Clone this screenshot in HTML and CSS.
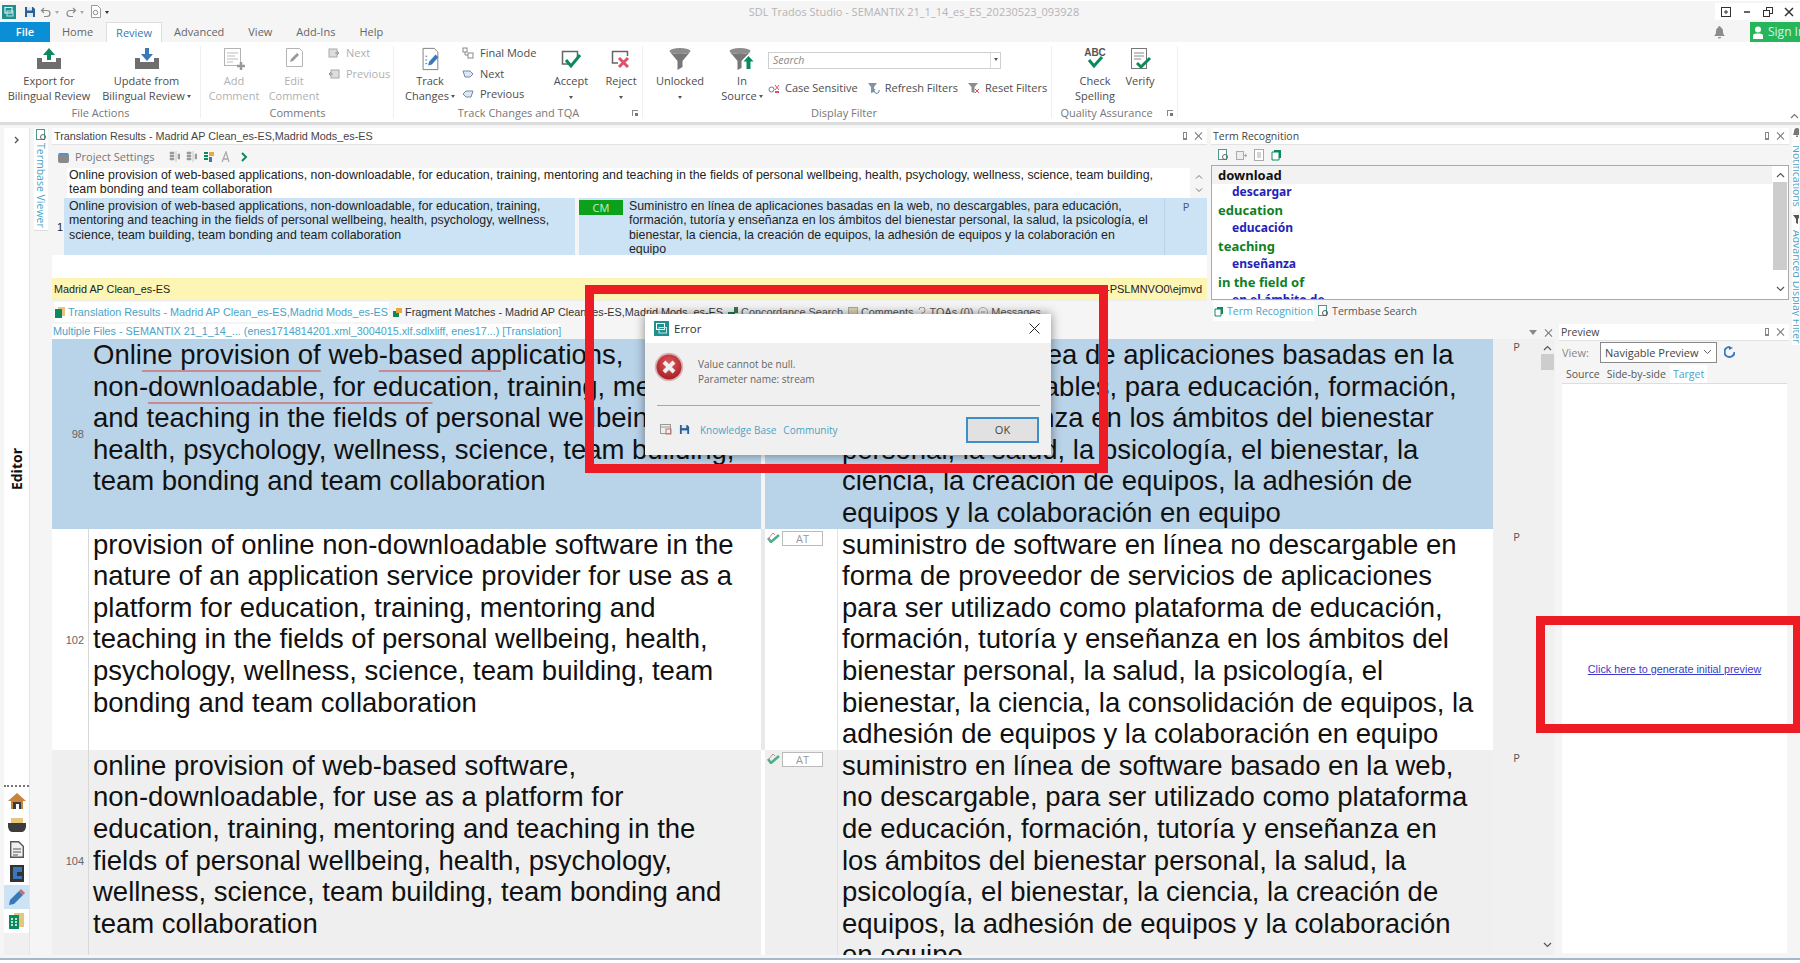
FILE: index.html
```html
<!DOCTYPE html>
<html lang="en">
<head>
    <meta charset="UTF-8">
    <meta name="viewport" content="width=device-width, initial-scale=1.0">
    <title>SDL Trados Studio</title>
    <link rel="stylesheet" href="styles.css">
</head>
<body>
    <!-- title bar -->
    <div class="titlebar">
        <div class="qat">
            <svg width="14" height="14" viewBox="0 0 14 14"><rect width="14" height="14" fill="#1f8f8f"/><rect x="3" y="2.5" width="7" height="5.5" fill="none" stroke="#fff"/><rect x="5" y="6" width="6" height="5" fill="none" stroke="#bfe8e0"/></svg>
            <svg width="12" height="12" viewBox="0 0 12 12"><path d="M1 1h8l2 2v8H1z" fill="#2c5f96"/><rect x="3" y="1" width="5" height="3.5" fill="#dde8f2"/><rect x="3" y="7" width="6" height="4" fill="#dde8f2"/></svg>
            <svg width="12" height="12" viewBox="0 0 12 12"><path d="M4 2L1.500 4.500 4 7M2 4.500h5a3 3 0 0 1 0 6H4" fill="none" stroke="#8a8a8a" stroke-width="1.200"/></svg>
            <span class="qat-dot"></span>
            <svg width="12" height="12" viewBox="0 0 12 12"><path d="M8 2l2.500 2.500L8 7M10 4.500H5a3 3 0 0 0 0 6h3" fill="none" stroke="#8a8a8a" stroke-width="1.200"/></svg>
            <span class="qat-dot"></span>
            <svg width="12" height="13" viewBox="0 0 12 13"><path d="M1.500 .5h6l3 3v9h-9z" fill="#fff" stroke="#9a9a9a"/><circle cx="5.500" cy="7.500" r="2.200" fill="none" stroke="#8a8a8a"/></svg>
            <span class="qat-dot dark"></span>
        </div>
        <div class="app-title">SDL Trados Studio - SEMANTIX 21_1_14_es_ES_20230523_093928</div>
        <div class="winctl">
            <span class="winbtn"><svg width="10" height="10" viewBox="0 0 10 10"><rect x=".5" y=".5" width="9" height="9" fill="none" stroke="#333"/><path d="M5 3v4M3 5h4" stroke="#333"/></svg></span>
            <span class="winbtn"><svg width="10" height="10" viewBox="0 0 10 10"><path d="M2 5h6" stroke="#333" stroke-width="1.500"/></svg></span>
            <span class="winbtn"><svg width="10" height="10" viewBox="0 0 10 10"><rect x="3.500" y=".5" width="6" height="6" fill="none" stroke="#333"/><rect x=".5" y="3.500" width="6" height="6" fill="#fff" stroke="#333"/></svg></span>
            <span class="winbtn"><svg width="10" height="10" viewBox="0 0 10 10"><path d="M1 1l8 8M9 1l-8 8" stroke="#333" stroke-width="1.500"/></svg></span>
        </div>
    </div>

    <!-- ribbon tabs -->
    <div class="tabbar">
        <div class="tab-file">File</div>
        <div class="tab t-home">Home</div>
        <div class="tab active">Review</div>
        <div class="tab">Advanced</div>
        <div class="tab">View</div>
        <div class="tab">Add-Ins</div>
        <div class="tab">Help</div>
        <div class="tab-right">
            <svg width="11" height="13" viewBox="0 0 11 13"><path d="M5.500 0c.8 0 1 .6 1 1.200C8.500 1.800 9 3.500 9 6c0 2 1 3 2 4H0c1-1 2-2 2-4 0-2.500.5-4.200 2.500-4.800C4.500.6 4.700 0 5.500 0zM4 11h3a1.500 1.500 0 0 1-3 0z" fill="#8c8c8c"/></svg>
            <div class="signin">
                <svg width="10" height="13" viewBox="0 0 10 13"><circle cx="5" cy="3.500" r="3" fill="#fff"/><path d="M0 13V9.500C0 8 2 7.500 5 7.500s5 .5 5 2V13z" fill="#fff"/></svg>
                <span>Sign In</span>
            </div>
        </div>
    </div>

    <!-- ribbon -->
    <div class="ribbon">
        <div class="group g-file">
            <div class="group-body">
                <div class="rbtn w84">
                    <svg width="26" height="24" viewBox="0 0 26 24"><path d="M13 1l6 7h-4v5h-4V8H7z" fill="#0d8a5d"/><path d="M1 11h5v4h14v-4h5v11H1z" fill="#6e6e6e"/></svg>
                    <span>Export for<br>Bilingual Review</span>
                </div>
                <div class="rbtn w87 ml12">
                    <svg width="26" height="24" viewBox="0 0 26 24"><path d="M11 1h4v6h4l-6 7-6-7h4z" fill="#3a78b8"/><path d="M1 11h5v4h14v-4h5v11H1z" fill="#6e6e6e"/></svg>
                    <span>Update from<br>Bilingual Review<i class="drop"></i></span>
                </div>
            </div>
            <div class="group-name">File Actions</div>
        </div>

        <div class="group g-comments">
            <div class="group-body">
                <div class="rbtn w50 off">
                    <svg width="24" height="24" viewBox="0 0 24 24"><rect x="2.500" y="1.500" width="16" height="17" fill="#fff" stroke="#b4b4b4"/><path d="M5 6h11M5 9h8M5 12h11M5 15h6" stroke="#bbb"/><path d="M15 19h8M19 15v8" stroke="#999" stroke-width="2.500"/></svg>
                    <span>Add<br>Comment</span>
                </div>
                <div class="rbtn w50 ml10 off">
                    <svg width="24" height="24" viewBox="0 0 24 24"><path d="M4.500 1.500h13l3 3v15h-16z" fill="#fff" stroke="#b4b4b4"/><path d="M8 15l1-3 6-6 2 2-6 6z" fill="#999"/></svg>
                    <span>Edit<br>Comment</span>
                </div>
                <div class="small-col off ml9">
                    <div class="small"><svg width="12" height="12" viewBox="0 0 12 12"><rect x="1" y="2" width="8" height="8" fill="#ddd" stroke="#aaa"/><path d="M7 6h4M9 4l2 2-2 2" fill="none" stroke="#999"/></svg><span>Next</span></div>
                    <div class="small"><svg width="12" height="12" viewBox="0 0 12 12"><rect x="3" y="2" width="8" height="8" fill="#ddd" stroke="#aaa"/><path d="M5 6H1M3 4L1 6l2 2" fill="none" stroke="#999"/></svg><span>Previous</span></div>
                </div>
            </div>
            <div class="group-name">Comments</div>
        </div>

        <div class="group g-track">
            <div class="group-body">
                <div class="rbtn w56">
                    <svg width="24" height="26" viewBox="0 0 24 26"><path d="M4.500 1.500h12l4 4v19h-16z" fill="#fff" stroke="#7a7a7a"/><path d="M7 10h3M7 14h2M7 18h2" stroke="#3a78b8" stroke-dasharray="2 1"/><path d="M10 20l1-4 7-8 3 3-7 8z" fill="#3a78b8"/></svg>
                    <span>Track<br>Changes<i class="drop"></i></span>
                </div>
                <div class="small-col track-col">
                    <div class="small"><svg width="12" height="12" viewBox="0 0 12 12"><rect x="1" y="1" width="4" height="4" fill="none" stroke="#888"/><rect x="6" y="6" width="5" height="5" fill="none" stroke="#888"/><path d="M3 5v3h3" fill="none" stroke="#888"/></svg><span>Final Mode</span></div>
                    <div class="small"><svg width="12" height="12" viewBox="0 0 12 12"><path d="M1 3h7l3 3-3 3H3z" fill="#dfe8f2" stroke="#6f8aa8"/></svg><span>Next</span></div>
                    <div class="small"><svg width="12" height="12" viewBox="0 0 12 12"><path d="M11 3H4L1 6l3 3h5z" fill="#dfe8f2" stroke="#6f8aa8"/></svg><span>Previous</span></div>
                </div>
                <div class="rbtn w44 ml5">
                    <svg width="22" height="24" viewBox="0 0 22 24"><path d="M8 17H2.500V4.500h15V10" fill="none" stroke="#666" stroke-width="1.500"/><path d="M6 13l5 6 9-11" fill="none" stroke="#0d8a5d" stroke-width="3"/></svg>
                    <span>Accept<br><i class="drop solo"></i></span>
                </div>
                <div class="rbtn w44 ml6">
                    <svg width="22" height="24" viewBox="0 0 22 24"><path d="M8 16H2.500V4.500h15V9" fill="none" stroke="#666" stroke-width="1.500"/><path d="M9 11l9 9M18 11l-9 9" stroke="#e0506a" stroke-width="3"/></svg>
                    <span>Reject<br><i class="drop solo"></i></span>
                </div>
            </div>
            <div class="group-name">Track Changes and TQA</div>
            <i class="launcher"></i>
        </div>

        <div class="group g-filter">
            <div class="group-body">
                <div class="rbtn w56 ml9">
                    <svg width="24" height="24" viewBox="0 0 24 24"><ellipse cx="12" cy="4" rx="10.500" ry="3" fill="#8c8c8c"/><path d="M2 5l7.500 9v9l5-3v-6L22 5c-3 2.500-17 2.500-20 0z" fill="#777"/></svg>
                    <span>Unlocked<br><i class="drop solo"></i></span>
                </div>
                <div class="rbtn w50 ml9">
                    <svg width="26" height="24" viewBox="0 0 26 24"><ellipse cx="11" cy="4" rx="10.500" ry="3" fill="#8c8c8c"/><path d="M1 5l7.500 9v9l4-2v-7L21 5c-3 2.500-17 2.500-20 0z" fill="#777"/><path d="M19.500 9l5 5.500H21.500V22h-4v-7.500h-3z" fill="#0d8a5d"/></svg>
                    <span>In<br>Source<i class="drop"></i></span>
                </div>
                <div class="filter-col">
                    <div class="search"><span>Search</span><b><i class="drop solo"></i></b></div>
                    <div class="filter-opts">
                        <div class="small"><svg width="12" height="12" viewBox="0 0 12 12"><path d="M7 3l4 5M11 3L7 8" stroke="#e0506a"/><path d="M7 9h4v2H7z" fill="#e0506a"/><circle cx="3.500" cy="7.500" r="2.500" fill="none" stroke="#5b7d9c"/></svg><span>Case Sensitive</span></div>
                        <div class="small"><svg width="13" height="12" viewBox="0 0 13 12"><path d="M1 1h9L7 5v5L4 11V5z" fill="#7e93a8"/><path d="M8 7a2.500 2.500 0 1 0 4 1" fill="none" stroke="#5b7d9c"/></svg><span>Refresh Filters</span></div>
                        <div class="small"><svg width="13" height="12" viewBox="0 0 13 12"><path d="M1 1h10L7.500 5v6l-3-1V5z" fill="#8c8c8c"/><path d="M8 7l4 4M12 7l-4 4" stroke="#e0506a"/></svg><span>Reset Filters</span></div>
                    </div>
                </div>
            </div>
            <div class="group-name">Display Filter</div>
        </div>

        <div class="group g-qa">
            <div class="group-body">
                <div class="rbtn w50 ml18">
                    <svg width="26" height="24" viewBox="0 0 26 24"><text x="13" y="9" class="abc">ABC</text><path d="M7 13l5 6 8-9" fill="none" stroke="#0d8a5d" stroke-width="3"/></svg>
                    <span>Check<br>Spelling</span>
                </div>
                <div class="rbtn w40">
                    <svg width="24" height="24" viewBox="0 0 24 24"><rect x="3.500" y="1.500" width="15" height="20" fill="#fff" stroke="#777"/><path d="M6 6h10M6 9h10M6 12h7" stroke="#888"/><path d="M9 16l4 4 9-9" fill="none" stroke="#0d8a5d" stroke-width="3"/></svg>
                    <span>Verify</span>
                </div>
            </div>
            <div class="group-name qa-name">Quality Assurance</div>
            <i class="launcher"></i>
        </div>
        <div class="ribbon-fold">
            <svg width="9" height="6" viewBox="0 0 9 6"><path d="M1 5l3.500-3.500L8 5" fill="none" stroke="#777" stroke-width="1.200"/></svg>
        </div>
    </div>

    <!-- workspace -->
    <div class="workspace">
        <div class="sidebar">
            <div class="side-toggle"><svg width="6" height="8" viewBox="0 0 6 8"><path d="M1 1l3 3-3 3" fill="none" stroke="#555" stroke-width="1.400"/></svg></div>
            <div class="side-label"><span>Editor</span></div>
            <div class="side-dots"></div>
            <div class="side-icon"><svg width="18" height="16" viewBox="0 0 18 16"><path d="M9 0L0 8h3v8h12V8h3z" fill="#c8843a"/><rect x="5" y="9" width="8" height="7" fill="#3c3c3c"/><rect x="8" y="11" width="3" height="5" fill="#fff"/></svg></div>
            <div class="side-icon"><svg width="18" height="14" viewBox="0 0 18 14"><rect x="3" y="0" width="12" height="6" fill="#e6c67a"/><path d="M0 5h18v3c0 3-2 6-4 6H4C2 14 0 11 0 8z" fill="#3c3c3c"/></svg></div>
            <div class="side-icon"><svg width="14" height="17" viewBox="0 0 14 17"><path d="M.7.700h8l4.600 4.600v11H.7z" fill="#eee" stroke="#555" stroke-width="1.400"/><path d="M3 8h8M3 11h8M3 14h5" stroke="#555"/></svg></div>
            <div class="side-icon"><svg width="14" height="17" viewBox="0 0 14 17"><rect width="14" height="17" fill="#333"/><path d="M3 2h9v5H7v4h5v3H3z" fill="#3a78b8"/></svg></div>
            <div class="side-icon current"><svg width="16" height="16" viewBox="0 0 16 16"><path d="M0 16l1-5 9-9 4 4-9 9z" fill="#3a78b8"/><path d="M10 2l2-2 4 4-2 2z" fill="#d06a6a"/></svg></div>
            <div class="side-icon"><svg width="15" height="16" viewBox="0 0 15 16"><rect x="5" y="0" width="10" height="14" fill="#e6c67a"/><rect x="0" y="2" width="10" height="14" fill="#0d8a5d"/><path d="M2 6h2M6 6h2M2 9h2M6 9h2M2 12h2M6 12h2" stroke="#fff" stroke-width="1.500"/></svg></div>
            <div class="side-rest"></div>
        </div>

        <div class="termbase-tab">
            <svg width="11" height="12" viewBox="0 0 11 12"><rect x=".5" y=".5" width="8" height="10" fill="#fff" stroke="#4c9a8a"/><circle cx="7" cy="8" r="2.500" fill="none" stroke="#666"/></svg>
            <span>Termbase Viewer</span>
        </div>

        <div class="main">
            <div class="top-row">
                <section class="panel tm-panel">
                    <div class="panel-head">
                        <span>Translation Results - Madrid AP Clean_es-ES,Madrid Mods_es-ES</span>
                        <span class="panel-ctl"><i class="pin"></i><i class="close"></i></span>
                    </div>
                    <div class="tm-tools">
                        <svg width="13" height="12" viewBox="0 0 13 12"><path d="M1 4h11v6a2 2 0 0 1-2 2H3a2 2 0 0 1-2-2z" fill="#8a8a8a"/><path d="M2 2h9l1 2H1z" fill="#5b8fc0"/></svg>
                        <span class="tm-settings">Project Settings</span>
                        <svg class="tool-first" width="11" height="11" viewBox="0 0 11 11"><path d="M1 1h4v2H1zM1 4h4v2H1zM1 7h4v2H1zM7 0v11M9 3h2v5H9z" fill="#9a9a9a" stroke="#9a9a9a" stroke-width=".5"/></svg>
                        <svg width="11" height="11" viewBox="0 0 11 11"><path d="M1 1h4v2H1zM1 4h4v2H1zM1 7h4v2H1zM7 0v11M9 3h2v5H9z" fill="#9a9a9a" stroke="#9a9a9a" stroke-width=".5"/></svg>
                        <svg width="11" height="11" viewBox="0 0 11 11"><path d="M1 1h4v2H1zM1 4h4v2H1zM1 7h4v2H1z" fill="#0d8a5d"/><path d="M6 1h5v4H6z" fill="#e6a93a"/><path d="M6 6h3v5H6z" fill="#3a78b8"/></svg>
                        <svg width="11" height="12" viewBox="0 0 11 12"><path d="M2 11l4-10 3 10M3 8h5" fill="none" stroke="#aaa" stroke-width="1.300"/></svg>
                        <svg class="tool-next" width="7" height="10" viewBox="0 0 7 10"><path d="M1 1l4 4-4 4" fill="none" stroke="#0d8a5d" stroke-width="2"/></svg>
                    </div>
                    <div class="tm-source">
                        <div class="tm-source-text">Online provision of web-based applications, non-downloadable, for education, training, mentoring and teaching in the fields of personal wellbeing, health, psychology, wellness, science, team building,<br>team bonding and team collaboration</div>
                        <div class="tm-source-scroll">
                            <svg width="8" height="6" viewBox="0 0 8 6"><path d="M1 4.500L4 1.500l3 3" fill="none" stroke="#777"/></svg>
                            <svg width="8" height="6" viewBox="0 0 8 6"><path d="M1 1.500L4 4.500l3-3" fill="none" stroke="#777"/></svg>
                        </div>
                    </div>
                    <div class="tm-hit">
                        <div class="tm-num">1</div>
                        <div class="tm-src">Online provision of web-based applications, non-downloadable, for education, training,<br>mentoring and teaching in the fields of personal wellbeing, health, psychology, wellness,<br>science, team building, team bonding and team collaboration</div>
                        <div class="tm-gap"></div>
                        <div class="tm-badge-cell"><span class="cm">CM</span></div>
                        <div class="tm-tgt">Suministro en línea de aplicaciones basadas en la web, no descargables, para educación,<br>formación, tutoría y enseñanza en los ámbitos del bienestar personal, la salud, la psicología, el<br>bienestar, la ciencia, la creación de equipos, la adhesión de equipos y la colaboración en<br>equipo</div>
                        <div class="tm-p">P</div>
                    </div>
                    <div class="tm-blank"></div>
                    <div class="tm-yellow">
                        <span class="tm-y-name">Madrid AP Clean_es-ES</span>
                        <span class="tm-y-user">DESKTOP-PSLMNVO0\ejmvd</span>
                    </div>
                    <div class="tm-tabs">
                        <div class="lower-tab on"><svg width="10" height="11" viewBox="0 0 10 11"><rect x="3" y="0" width="7" height="9" fill="#e6c67a"/><rect y="2" width="7" height="9" fill="#0d8a5d"/></svg><span>Translation Results - Madrid AP Clean_es-ES,Madrid Mods_es-ES</span></div>
                        <div class="lower-tab"><svg width="9" height="9" viewBox="0 0 9 9"><rect y="3" width="6" height="6" fill="#0d8a5d"/><rect x="3" width="6" height="5" fill="#e6a93a"/></svg><span>Fragment Matches - Madrid AP Clean_es-ES,Madrid Mods_es-ES</span></div>
                        <div class="lower-tab"><svg width="10" height="10" viewBox="0 0 10 10"><rect y="5" width="7" height="5" fill="#0d8a5d"/><rect x="6" width="4" height="6" fill="#3a7a50"/></svg><span>Concordance Search</span></div>
                        <div class="lower-tab"><svg width="10" height="10" viewBox="0 0 10 10"><rect x=".5" y=".5" width="9" height="9" fill="#ddd6b0" stroke="#aaa"/></svg><span>Comments</span></div>
                        <div class="lower-tab"><svg width="8" height="10" viewBox="0 0 8 10"><path d="M1 3a3 3 0 1 1 3 3v2M4 9v1" fill="none" stroke="#999"/></svg><span>TQAs (0)</span></div>
                        <div class="lower-tab"><svg width="10" height="10" viewBox="0 0 10 10"><circle cx="5" cy="5" r="4.500" fill="none" stroke="#aaa"/><path d="M3 5h4" stroke="#999"/></svg><span>Messages</span></div>
                    </div>
                </section>

                <section class="panel term-panel">
                    <div class="panel-head">
                        <span class="ui">Term Recognition</span>
                        <span class="panel-ctl"><i class="pin"></i><i class="close"></i></span>
                    </div>
                    <div class="term-tools">
                        <svg width="11" height="12" viewBox="0 0 11 12"><rect x=".5" y=".5" width="8" height="10" fill="#fff" stroke="#4c9a8a"/><circle cx="7" cy="8" r="2.500" fill="none" stroke="#666"/></svg>
                        <svg width="11" height="11" viewBox="0 0 11 11"><rect x=".5" y="1.500" width="7" height="8" fill="#eee" stroke="#aaa"/><path d="M7 5.500h4M9 4l2 1.500L9 7" fill="none" stroke="#aaa"/></svg>
                        <svg width="10" height="12" viewBox="0 0 10 12"><rect x=".5" y=".5" width="9" height="11" fill="#fff" stroke="#aaa"/><path d="M3 4h4M3 6h4M3 8h4" stroke="#aaa"/></svg>
                        <svg width="11" height="12" viewBox="0 0 11 12"><path d="M1 3h7v8H1z" fill="#fff" stroke="#0d8a5d"/><path d="M3 1h7v8H8V3H3z" fill="#0d8a5d"/></svg>
                    </div>
                    <div class="term-list">
                        <div class="terms">
                            <div class="term-src first">download</div>
                            <div class="term-tgt">descargar</div>
                            <div class="term-src">education</div>
                            <div class="term-tgt">educación</div>
                            <div class="term-src">teaching</div>
                            <div class="term-tgt">enseñanza</div>
                            <div class="term-src">in the field of</div>
                            <div class="term-tgt">en el ámbito de</div>
                        </div>
                        <div class="term-scroll">
                            <svg width="9" height="6" viewBox="0 0 9 6"><path d="M1 5l3.500-3.500L8 5" fill="none" stroke="#555" stroke-width="1.200"/></svg>
                            <div class="term-thumb"></div>
                            <svg class="arrow-end" width="9" height="6" viewBox="0 0 9 6"><path d="M1 1l3.500 3.500L8 1" fill="none" stroke="#555" stroke-width="1.200"/></svg>
                        </div>
                    </div>
                    <div class="term-tabs">
                        <div class="lower-tab on ui"><svg width="10" height="11" viewBox="0 0 10 11"><path d="M1 3h6v7H1z" fill="#fff" stroke="#0d8a5d"/><path d="M3 1h6v7H7V3H3z" fill="#0d8a5d"/></svg><span>Term Recognition</span></div>
                        <div class="lower-tab ui"><svg width="11" height="12" viewBox="0 0 11 12"><rect x=".5" y=".5" width="8" height="10" fill="#fff" stroke="#4c9a8a"/><circle cx="7" cy="8" r="2.500" fill="none" stroke="#555"/></svg><span>Termbase Search</span></div>
                    </div>
                </section>
            </div>

            <div class="bottom-row">
                <section class="editor">
                    <div class="editor-head">
                        <div class="doc-tab">Multiple Files - SEMANTIX 21_1_14_... (enes1714814201.xml_3004015.xlf.sdlxliff, enes17...) [Translation]</div>
                        <span class="panel-ctl"><i class="menu"></i><i class="close"></i></span>
                    </div>
                    <div class="editor-body">
                        <div class="segments">
                            <div class="seg picked">
                                <div class="seg-num">98</div>
                                <div class="seg-src">Onli<span class="mark">ne provision of</span> web<span class="mark">-based ap</span>plications,<br>non-<span class="mark">downloa</span><span class="mark">dable, for educ</span>ation, training, mentoring<br>and teaching in the fields of personal wellbeing,<br>health, psychology, wellness, science, team building,<br>team bonding and team collaboration</div>
                                <div class="seg-gap"></div>
                                <div class="seg-mid"></div>
                                <div class="seg-tgt">Suministro en línea de aplicaciones basadas en la<br>web, no descargables, para educación, formación,<br>tutoría y enseñanza en los ámbitos del bienestar<br>personal, la salud, la psicología, el bienestar, la<br>ciencia, la creación de equipos, la adhesión de<br>equipos y la colaboración en equipo</div>
                                <div class="seg-p">P</div>
                            </div>
                            <div class="seg">
                                <div class="seg-num">102</div>
                                <div class="seg-src">provision of online non-downloadable software in the<br>nature of an application service provider for use as a<br>platform for education, training, mentoring and<br>teaching in the fields of personal wellbeing, health,<br>psychology, wellness, science, team building, team<br>bonding and team collaboration</div>
                                <div class="seg-gap"></div>
                                <div class="seg-mid">
                                    <svg width="13" height="12" viewBox="0 0 13 12"><path d="M1 7l3 4 8-7" fill="none" stroke="#4fae8a" stroke-width="2.500"/><path d="M1 8l5-6 2 2" fill="none" stroke="#c98a8a"/></svg>
                                    <span class="at">AT</span>
                                </div>
                                <div class="seg-tgt">suministro de software en línea no descargable en<br>forma de proveedor de servicios de aplicaciones<br>para ser utilizado como plataforma de educación,<br>formación, tutoría y enseñanza en los ámbitos del<br>bienestar personal, la salud, la psicología, el<br>bienestar, la ciencia, la consolidación de equipos, la<br>adhesión de equipos y la colaboración en equipo</div>
                                <div class="seg-p">P</div>
                            </div>
                            <div class="seg grey">
                                <div class="seg-num">104</div>
                                <div class="seg-src">online provision of web-based software,<br>non-downloadable, for use as a platform for<br>education, training, mentoring and teaching in the<br>fields of personal wellbeing, health, psychology,<br>wellness, science, team building, team bonding and<br>team collaboration</div>
                                <div class="seg-gap"></div>
                                <div class="seg-mid">
                                    <svg width="13" height="12" viewBox="0 0 13 12"><path d="M1 7l3 4 8-7" fill="none" stroke="#4fae8a" stroke-width="2.500"/><path d="M1 8l5-6 2 2" fill="none" stroke="#c98a8a"/></svg>
                                    <span class="at">AT</span>
                                </div>
                                <div class="seg-tgt">suministro en línea de software basado en la web,<br>no descargable, para ser utilizado como plataforma<br>de educación, formación, tutoría y enseñanza en<br>los ámbitos del bienestar personal, la salud, la<br>psicología, el bienestar, la ciencia, la creación de<br>equipos, la adhesión de equipos y la colaboración<br>en equipo</div>
                                <div class="seg-p">P</div>
                            </div>
                        </div>
                        <div class="editor-scroll">
                            <svg width="9" height="6" viewBox="0 0 9 6"><path d="M1 5l3.500-3.500L8 5" fill="none" stroke="#555" stroke-width="1.200"/></svg>
                            <div class="editor-thumb"></div>
                            <svg class="arrow-end" width="9" height="6" viewBox="0 0 9 6"><path d="M1 1l3.500 3.500L8 1" fill="none" stroke="#555" stroke-width="1.200"/></svg>
                        </div>
                    </div>
                </section>

                <section class="panel preview">
                    <div class="panel-head">
                        <span class="ui">Preview</span>
                        <span class="panel-ctl"><i class="pin"></i><i class="close"></i></span>
                    </div>
                    <div class="preview-view">
                        <span class="view-label">View:</span>
                        <div class="view-select"><span>Navigable Preview</span><svg width="9" height="6" viewBox="0 0 9 6"><path d="M1 1l3.500 3.500L8 1" fill="none" stroke="#666"/></svg></div>
                        <svg width="11" height="12" viewBox="0 0 11 12"><path d="M5.500 1a5 5 0 1 0 5 5" fill="none" stroke="#3a78b8" stroke-width="2"/><path d="M5 0l4 2-4 2z" fill="#3a78b8"/></svg>
                    </div>
                    <div class="preview-tabs">
                        <span>Source</span>
                        <span>Side-by-side</span>
                        <span class="on">Target</span>
                    </div>
                    <div class="preview-body"><a href="#">Click here to generate initial preview</a></div>
                </section>
            </div>
        </div>

        <div class="rail">
            <div class="rail-tab r-notify"><svg width="8" height="9" viewBox="0 0 8 9"><path d="M4 0c2 0 3 1.500 3 4l1 3H0l1-3c0-2.500 1-4 3-4zM3 7.500h2V9H3z" fill="#777"/></svg><span>Notifications</span></div>
            <div class="rail-tab r-filter"><svg width="8" height="9" viewBox="0 0 8 9"><path d="M0 0h8L5 4v5L3 8V4z" fill="#555"/></svg><span>Advanced Display Filter</span></div>
        </div>
    </div>
    <div class="statusbar"></div>

    <!-- error dialog -->
    <div class="dialog">
        <div class="dlg-title">
            <svg width="15" height="15" viewBox="0 0 15 15"><rect width="15" height="15" fill="#1f8f8f"/><rect x="2.500" y="2.500" width="8" height="6" fill="none" stroke="#fff"/><rect x="5" y="6.500" width="7.500" height="5.500" fill="none" stroke="#bfe8e0"/></svg>
            <span>Error</span>
            <svg class="dlg-x" width="11" height="11" viewBox="0 0 11 11"><path d="M.5.500l10 10M10.500.500l-10 10" stroke="#222"/></svg>
        </div>
        <div class="dlg-body">
            <div class="dlg-msg">
                <svg width="30" height="30" viewBox="0 0 30 30"><defs><radialGradient id="errball" cx=".5" cy=".35" r=".7"><stop offset="0" stop-color="#e0585c"/><stop offset="1" stop-color="#a01c22"/></radialGradient></defs><circle cx="15" cy="15" r="14.300" fill="#d9b5b5"/><circle cx="15" cy="15" r="12.500" fill="url(#errball)"/><path d="M10 10l10 10M20 10L10 20" stroke="#f0f0f0" stroke-width="4"/></svg>
                <p>Value cannot be null.<br>Parameter name: stream</p>
            </div>
            <div class="dlg-foot">
                <svg width="12" height="11" viewBox="0 0 12 11"><rect x=".5" y=".5" width="10" height="9" fill="#eee" stroke="#999"/><path d="M.5 3h10" stroke="#999"/><rect x="6" y="5" width="5" height="5" fill="none" stroke="#d06a6a"/></svg>
                <svg width="11" height="11" viewBox="0 0 12 12"><path d="M1 1h8l2 2v8H1z" fill="#2c5f96"/><rect x="3" y="1" width="5" height="3.500" fill="#dde8f2"/><rect x="3" y="7" width="6" height="4" fill="#dde8f2"/></svg>
                <span class="dlg-link">Knowledge Base</span>
                <span class="dlg-link">Community</span>
                <div class="dlg-ok">OK</div>
            </div>
        </div>
    </div>

    <!-- red annotation frames -->
    <div class="redbox redbox-dialog"></div>
    <div class="redbox redbox-preview"></div>
</body>
</html>
```

FILE: styles.css
```css
*{margin:0;padding:0;box-sizing:border-box;}
html,body{width:1800px;height:963px;overflow:hidden;}
body{
    position:relative;
    display:flex;
    flex-direction:column;
    background:#f5f5f5;
    color:#4d4d4d;
    font-family:"Open Sans","Noto Sans",sans-serif;
    font-size:11px;
}
svg{flex:none;display:block;}
i{font-style:normal;}
.ui{font-family:"Open Sans","Noto Sans",sans-serif;}

/* title bar */
.titlebar{height:22px;display:flex;align-items:center;background:#f5f5f5;border-top:1px solid #fff;}
.qat{width:106px;display:flex;align-items:center;gap:4px;padding-left:2px;}
.qat svg:first-child{margin-right:4px;}
.qat-dot{width:0;height:0;border:2px solid transparent;border-top:3px solid #aaa;margin:3px 2px 0 -1px;}
.qat-dot.dark{border-top-color:#333;}
.app-title{flex:1;text-align:center;color:#b4b4b4;padding-left:22px;font-size:11px;}
.winctl{width:100px;display:flex;padding-left:15px;}
.winbtn{width:24px;height:17px;background:#fff;display:flex;align-items:center;justify-content:center;}

/* ribbon tabs */
.tabbar{height:20px;display:flex;align-items:stretch;background:#f5f5f5;font-size:11px;color:#666;line-height:20px;}
.tab-file{width:50px;background:#0a8fd6;color:#fff;text-align:center;font-weight:600;}
.tab{padding:0 11px;margin-right:2px;}
.t-home{padding:0 12px;margin-right:0;}
.tab.active{width:56px;padding:0;text-align:center;background:#fff;color:#3a78b8;border:1px solid #ddd;border-bottom:0;margin-right:1px;margin-left:1px;line-height:19px;}
.tab-right{margin-left:auto;display:flex;align-items:center;gap:25px;}
.signin{width:50px;height:20px;background:#27b55c;color:#d8f5e2;display:flex;align-items:center;gap:5px;padding-left:3px;white-space:nowrap;overflow:hidden;font-size:12px;}

/* ribbon */
.ribbon{height:83px;display:flex;background:#fff;border-bottom:3px solid #dcdcdc;position:relative;}
.group{position:relative;display:flex;flex-direction:column;height:80px;padding-top:5px;}
.group::after{content:"";position:absolute;right:0;top:4px;bottom:4px;width:1px;background:#efefef;}
.g-file{width:201px;padding-left:7px;}
.g-comments{width:193px;padding-left:8px;}
.g-track{width:249px;padding-left:8px;}
.g-filter{width:409px;}
.g-qa{width:126px;}
.group-body{display:flex;height:58px;}
.group-name{height:16px;line-height:16px;text-align:center;color:#777;margin-left:-7px;}
.g-comments .group-name,.g-track .group-name{margin-left:-8px;}
.qa-name{padding-right:10px;}
.launcher{position:absolute;right:5px;bottom:6px;width:6px;height:6px;border-left:1px solid #888;border-top:1px solid #888;}
.launcher::after{content:"";position:absolute;right:0;bottom:0;width:3px;height:3px;background:#777;}
.rbtn{display:flex;flex-direction:column;align-items:center;text-align:center;line-height:15px;color:#4d4d4d;white-space:nowrap;}
.rbtn svg{height:24px;margin-bottom:2px;}
.rbtn.off,.small-col.off{color:#b0b0b0;}
.w84{width:84px;}.w87{width:87px;}.w50{width:50px;}.w56{width:56px;}.w44{width:44px;}.w40{width:40px;}
.ml5{margin-left:5px;}.ml6{margin-left:6px;}.ml9{margin-left:9px;}.ml10{margin-left:10px;}.ml12{margin-left:12px;}.ml18{margin-left:18px;}
.drop{display:inline-block;width:0;height:0;border:2px solid transparent;border-top:3px solid #555;margin-left:2px;vertical-align:0;}
.drop.solo{margin-left:0;vertical-align:-1px;}
.small-col{display:flex;flex-direction:column;margin-top:-4px;}
.small{display:flex;align-items:center;gap:6px;white-space:nowrap;height:20px;line-height:20px;color:inherit;}
.small-col .small{margin-bottom:.5px;}
.track-col{width:82px;margin-left:4px;}
.filter-col{margin-left:1px;width:280px;padding-top:5px;}
.search{width:233px;height:17px;border:1px solid #cfcfcf;display:flex;font-style:italic;color:#8a8a8a;font-size:10.5px;line-height:15px;padding-left:4px;}
.search span{flex:1;}
.search b{width:10px;border-left:1px solid #ddd;display:flex;align-items:center;justify-content:center;}
.filter-opts{display:flex;gap:9px;margin-top:9px;}
.filter-opts .small{gap:5px;}
.abc{font:bold 10px "Liberation Sans",sans-serif;fill:#555;text-anchor:middle;}
.ribbon-fold{position:absolute;right:1px;bottom:3px;}

/* workspace */
.workspace{flex:1;display:flex;padding:3px 0 3px 4px;background:#f5f5f5;min-height:0;}
.statusbar{height:5px;background:#fff;border-top:2px solid #a9b8c8;}
.sidebar{width:26px;display:flex;flex-direction:column;background:#fff;border-right:1px solid #e4e4e4;}
.side-toggle{height:24px;display:flex;align-items:center;justify-content:center;}
.side-label{flex:1;display:flex;align-items:center;justify-content:center;padding-top:2px;}
.side-label span{writing-mode:vertical-rl;transform:rotate(180deg);font:bold 14px "Open Sans",sans-serif;color:#111;}
.side-dots{height:4px;border-top:2px dotted #777;}
.side-icon{height:24px;display:flex;align-items:center;justify-content:center;}
.side-icon.current{background:#cbe3f5;}
.side-rest{height:22px;background:#f0f0f0;}
.termbase-tab{width:14px;height:103px;margin-left:4px;background:#fff;display:flex;flex-direction:column;align-items:center;padding-top:1px;border-bottom:1px solid #ddd;}
.termbase-tab span{writing-mode:vertical-rl;color:#4aa3c7;font-size:10.5px;margin-top:2px;white-space:nowrap;}
.main{width:1737px;margin-left:4px;display:flex;flex-direction:column;}
.top-row{height:194px;display:flex;gap:4px;}
.bottom-row{flex:1;display:flex;gap:4px;min-height:0;}

/* panels */
.panel{display:flex;flex-direction:column;}
.panel-head{height:17px;background:#fff;display:flex;align-items:center;justify-content:space-between;padding:0 4px 0 2px;border-bottom:1px solid #e2e2e2;font:10.8px "Liberation Sans",sans-serif;color:#444;}
.panel-head .ui{font-size:10.5px;}
.panel-ctl{display:flex;align-items:center;gap:8px;}
.pin{width:4px;height:8px;border:1px solid #888;border-bottom:2px solid #888;}
.close{position:relative;width:8px;height:8px;}
.close::before,.close::after{content:"";position:absolute;left:3px;top:-1px;width:1px;height:10px;background:#777;transform:rotate(45deg);}
.close::after{transform:rotate(-45deg);}
.menu{width:0;height:0;border:4px solid transparent;border-top:5px solid #888;margin-top:4px;}

/* translation results */
.tm-panel{width:1155px;font:12.35px/14.4px "Liberation Sans",sans-serif;color:#222;}
.tm-tools{height:23px;display:flex;align-items:center;gap:6px;padding-left:5px;background:#f5f5f5;}
.tm-settings{font:11px "Open Sans",sans-serif;color:#777;margin-left:-1px;margin-right:6px;}
.tool-first{margin-left:2px;}
.tool-next{margin-left:4px;}
.tm-source{height:30px;display:flex;padding-left:17px;background:#f5f5f5;}
.tm-source-text{flex:1;background:#fff;line-height:14px;white-space:nowrap;overflow:hidden;margin-left:-2px;padding-left:2px;}
.tm-source-scroll{width:17px;display:flex;flex-direction:column;align-items:center;justify-content:center;gap:7px;}
.tm-hit{height:57px;display:flex;background:#fff;}
.tm-num{width:12px;background:#f5f5f5;display:flex;align-items:center;justify-content:center;font-size:11px;padding-left:4px;padding-top:2px;}
.tm-src{width:511px;background:#cbe3f5;padding:1px 0 0 5px;white-space:nowrap;}
.tm-gap{width:4px;background:#f5f5f5;}
.tm-badge-cell{width:44px;background:#cbe3f5;padding-top:2px;}
.cm{display:block;height:15px;background:#0da11b;color:#cdebd0;text-align:center;font:11px/15px "Open Sans",sans-serif;}
.tm-tgt{width:541px;background:#cbe3f5;padding:1px 0 0 6px;white-space:nowrap;}
.tm-p{width:43px;background:#cbe3f5;border-left:1px solid #b9d4ea;text-align:center;font:11px/18px "Open Sans",sans-serif;color:#555;}
.tm-blank{height:23px;background:#fff;}
.tm-yellow{height:23px;background:#fdf5b4;display:flex;align-items:center;justify-content:space-between;padding:0 5px 0 2px;font-size:10.8px;color:#222;border-bottom:1px solid #eee;}
.tm-y-user{font-size:11px;}
.tm-tabs{height:21px;display:flex;align-items:flex-end;padding-left:2px;font-size:10.85px;gap:3px;background:#f5f5f5;}
.term-tabs{height:22px;display:flex;align-items:flex-start;padding:1px 0 0 2px;gap:3px;font-size:10.5px;}
.lower-tab{height:20px;display:flex;align-items:center;gap:3px;padding:0 1px;color:#555;white-space:nowrap;}
.lower-tab.on{background:#fff;color:#4aa3c7;}
.tm-tabs .lower-tab:nth-child(2){color:#333;}

/* term recognition */
.term-panel{width:578px;}
.term-tools{height:20px;display:flex;align-items:center;gap:7px;padding-left:7px;}
.term-list{height:135px;display:flex;background:#fff;border:1px solid #aaa;overflow:hidden;}
.terms{flex:1;overflow:hidden;font:bold 13px/17.5px "Noto Sans",sans-serif;}
.term-src{color:#11801f;padding-left:6px;height:19.5px;line-height:19px;}
.term-src.first{color:#111;background:#f2f2f2;height:18px;line-height:18px;}
.term-tgt{color:#2323b8;padding-left:20px;font-size:12px;height:16.5px;line-height:16px;}
.term-scroll{width:16px;display:flex;flex-direction:column;align-items:center;padding-top:6px;background:#fff;}
.term-thumb{width:14px;height:88px;background:#cdcdcd;margin-top:4px;}
.arrow-end{margin-top:auto;margin-bottom:7px;}

/* editor */
.editor{width:1503px;display:flex;flex-direction:column;font-family:"Liberation Sans",sans-serif;}
.editor-head{height:17px;display:flex;align-items:flex-end;justify-content:space-between;padding-right:2px;}
.doc-tab{width:509px;height:15px;background:#fff;color:#4aa3c7;font-size:10.8px;line-height:14px;padding-left:1px;white-space:nowrap;}
.editor-body{flex:1;display:flex;min-height:0;background:#f0f0f0;}
.segments{width:1488px;overflow:hidden;}
.seg{display:flex;background:#fff;color:#111;font-size:27.5px;line-height:31.6px;white-space:nowrap;}
.seg-num{width:37px;display:flex;align-items:center;justify-content:flex-end;padding:3px 4px 0 0;font-size:11px;color:#666;border-right:1px solid #d8d8d8;}
.seg-src{width:672px;padding-left:4px;}
.mark{text-decoration:underline;text-decoration-color:#c98a92;text-decoration-thickness:1.5px;text-underline-offset:6px;text-decoration-skip-ink:none;}
.seg-gap{width:4px;background:#e9e9e9;}
.seg-mid{width:73px;display:flex;align-items:flex-start;gap:2px;padding:2px 0 0 2px;border-right:1px solid #e2e2e2;}
.seg-tgt{width:655px;padding-left:4px;}
.seg-p{width:47px;background:#f0f0f0;font:11px/15px "Open Sans",sans-serif;text-align:center;color:#555;}
.at{display:block;width:41px;height:15px;border:1px solid #bbb;background:#fff;color:#999;font:11px/13px "Open Sans",sans-serif;text-align:center;}
.seg.picked>div:not(.seg-p):not(.seg-gap){background:#b9d3e8;border-right-color:transparent;}
.seg.picked .seg-gap{background:#f5f5f5;}
.seg.grey>div:not(.seg-gap):not(.seg-p){background:#efefef;}
.seg.grey .seg-num{border-right-color:#d8d8d8;}
.seg.grey .seg-gap{background:#fff;}
.editor-scroll{width:15px;background:#f0f0f0;display:flex;flex-direction:column;align-items:center;padding-top:6px;}
.editor-thumb{width:13px;height:16px;background:#cdcdcd;margin-top:3px;}

/* preview */
.preview{width:230px;margin-top:2px;}
.preview-view{height:22px;display:flex;align-items:center;padding-left:3px;gap:7px;}
.view-label{color:#888;width:28px;margin-right:2px;}
.view-select{width:117px;height:21px;background:#fff;border:1px solid #888;display:flex;align-items:center;justify-content:space-between;padding:0 4px;color:#444;margin-left:1px;}
.preview-tabs{height:20px;display:flex;align-items:flex-end;padding-left:7px;gap:7px;font-size:10.5px;color:#555;}
.preview-tabs span{height:18px;line-height:18px;}
.preview-tabs .on{background:#fff;color:#4aa3c7;padding:0 3px;margin-left:-3px;}
.preview-body{flex:1;background:#fff;margin:0 2px 2px 3px;border-top:1px solid #ddd;display:flex;justify-content:center;padding-top:278px;}
.preview-body a{color:#3a3acc;font:10.8px/14px "Liberation Sans",sans-serif;white-space:nowrap;}

/* right rail */
.rail{width:7px;margin-left:3px;display:flex;flex-direction:column;gap:3px;overflow:hidden;}
.rail-tab{width:14px;background:#fff;color:#4aa3c7;font-size:10.5px;white-space:nowrap;padding-left:1px;}
.rail-tab span{writing-mode:vertical-rl;display:block;margin-left:-3px;}
.r-notify{height:84px;}
.r-notify span{padding-top:8px;}
.r-filter{height:130px;}
.r-filter span{padding-top:6px;}

/* error dialog */
.dialog{position:absolute;left:645px;top:314px;width:406px;height:141px;background:#f0f0f0;box-shadow:0 0 10px rgba(0,0,0,.45);display:flex;flex-direction:column;}
.dlg-title{height:29px;background:#fff;display:flex;align-items:center;gap:5px;padding:0 11px 0 9px;color:#333;font-size:11.5px;}
.dlg-x{margin-left:auto;}
.dlg-body{flex:1;display:flex;flex-direction:column;padding:0 11px 0 9px;}
.dlg-msg{height:63px;display:flex;padding-top:9px;gap:14px;border-bottom:1px solid #a8a8a8;margin-left:3px;}
.dlg-msg p{font-size:10px;line-height:15px;color:#666;padding-top:5px;}
.dlg-msg svg{margin-left:-3px;}
.dlg-foot{flex:1;display:flex;align-items:center;gap:7px;padding:0 0 2px 6px;}
.dlg-link{color:#4aa3c7;font-size:10px;}
.dlg-foot svg+.dlg-link{margin-left:3px;}
.dlg-ok{width:73px;height:26px;margin-left:auto;margin-right:1px;background:#e1e1e1;border:2px solid #3e8ec8;text-align:center;line-height:22px;color:#444;}

/* red annotation frames */
.redbox{position:absolute;border:9px solid #ed1c24;}
.redbox-dialog{left:585px;top:285px;width:523px;height:188px;}
.redbox-preview{left:1536px;top:616px;width:264px;height:117px;border-right-width:7px;}
```
